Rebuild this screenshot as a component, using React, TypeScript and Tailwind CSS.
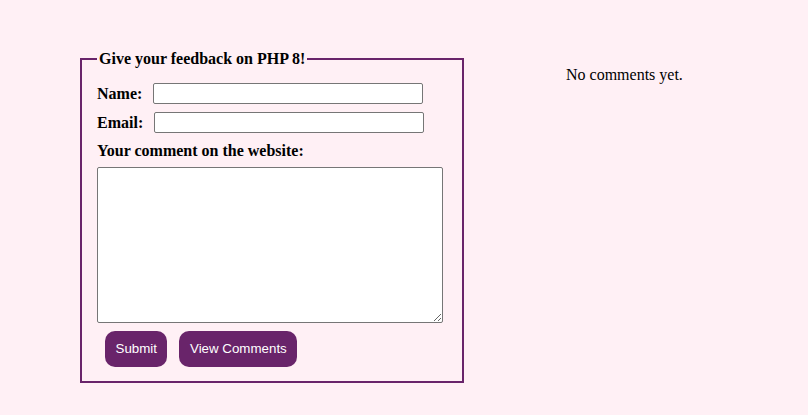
export default function App() {
  return (
    <div className="min-h-screen w-full bg-[#fff0f5] flex items-start" style={{ fontFamily: '"Liberation Serif", "Times New Roman", serif' }}>
      <fieldset className="ml-[80px] mt-[50px] w-[384px] border-2 border-[#69246a] pl-[15px] pr-[15px] pb-[14px] pt-[15px] text-black">
        <legend className="px-[2px] text-base font-bold leading-[18px]">Give your feedback on PHP 8!</legend>
        <div className="flex items-center h-[21px]">
          <label className="font-bold text-base mr-[11px]">Name:</label>
          <input type="text" className="w-[270px] h-[21px] bg-white border border-[#767676] rounded-[2px]" />
        </div>
        <div className="flex items-center h-[21px] mt-[8px]">
          <label className="font-bold text-base mr-[11px]">Email:</label>
          <input type="text" className="w-[270px] h-[21px] bg-white border border-[#767676] rounded-[2px]" />
        </div>
        <div className="mt-[9px] font-bold text-base leading-[18px]">Your comment on the website:</div>
        <textarea className="block mt-[7px] w-[346px] h-[156px] bg-white border border-[#767676] rounded-[2px]" />
        <div className="flex mt-[8px] ml-[8px] gap-[12px]" style={{ fontFamily: '"Liberation Sans", Arial, sans-serif' }}>
          <button className="h-[36px] px-[10.5px] rounded-[10px] bg-[#69246a] text-white text-[13.33px]">Submit</button>
          <button className="h-[36px] px-[10.5px] rounded-[10px] bg-[#69246a] text-white text-[13.33px]">View Comments</button>
        </div>
      </fieldset>
      <div className="ml-[102px] mt-[66px] text-base leading-[18px] text-black">No comments yet.</div>
    </div>
  );
}
